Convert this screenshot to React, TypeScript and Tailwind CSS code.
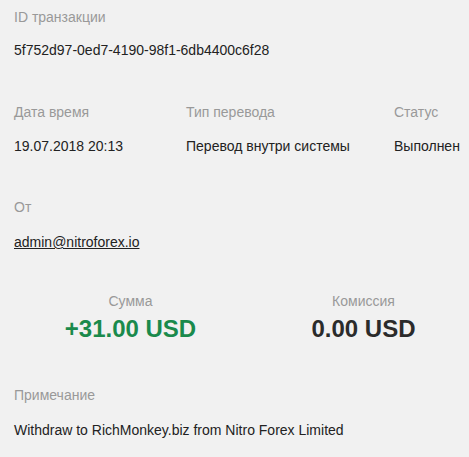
export default function App() {
  return (
    <div
      className="min-h-screen bg-[#f1f1f1] px-[14px] pt-[7px] text-[14px] leading-[20px] text-[#222]"
      style={{ fontFamily: '"Liberation Sans", Arial, sans-serif' }}
    >
      <div>
        <div className="text-[#999]">ID транзакции</div>
        <div className="mt-[13px]">5f752d97-0ed7-4190-98f1-6db4400c6f28</div>
      </div>

      <div className="mt-[42px] flex">
        <div className="w-[172px] shrink-0">
          <div className="text-[#999]">Дата время</div>
          <div className="mt-[14px]">19.07.2018 20:13</div>
        </div>
        <div className="w-[208px] shrink-0">
          <div className="text-[#999]">Тип перевода</div>
          <div className="mt-[14px]">Перевод внутри системы</div>
        </div>
        <div className="shrink-0">
          <div className="text-[#999]">Статус</div>
          <div className="mt-[14px]">Выполнен</div>
        </div>
      </div>

      <div className="mt-[41px]">
        <div className="text-[#999]">От</div>
        <div className="mt-[15px]">
          <a href="#" className="underline">
            admin@nitroforex.io
          </a>
        </div>
      </div>

      <div className="mt-[39px] flex">
        <div className="w-[233px] shrink-0 text-center">
          <div className="text-[#999]">Сумма</div>
          <div className="mt-[4px] text-[24px] leading-[28px] font-bold text-[#1a8a4c]">
            +31.00 USD
          </div>
        </div>
        <div className="w-[233px] shrink-0 text-center">
          <div className="text-[#999]">Комиссия</div>
          <div className="mt-[4px] text-[24px] leading-[28px] font-bold text-[#2b2b2b]">
            0.00 USD
          </div>
        </div>
      </div>

      <div className="mt-[42px]">
        <div className="text-[#999]">Примечание</div>
        <div className="mt-[15px]">Withdraw to RichMonkey.biz from Nitro Forex Limited</div>
      </div>
    </div>
  );
}
